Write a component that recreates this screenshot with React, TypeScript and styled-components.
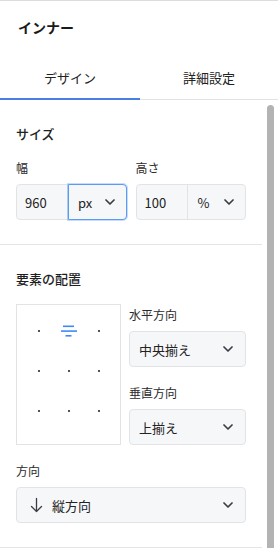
import { createGlobalStyle } from "styled-components"
import styled from "styled-components"

const GlobalStyle = createGlobalStyle`
  * { box-sizing: border-box; }
  body {
    margin: 0;
    background: #fff;
    font-family: "Noto Sans CJK JP", "Noto Sans", sans-serif;
    color: #222;
  }
`

const Chevron = () => (
  <svg width="10" height="6" viewBox="0 0 10 6">
    <polyline points="1,1 5,5 9,1" fill="none" stroke="#3a3d44" strokeWidth="1.7" strokeLinecap="round" strokeLinejoin="round" />
  </svg>
)

const ArrowDown = () => (
  <svg width="13" height="16" viewBox="0 0 13 16">
    <path d="M6.5 1.5v13M1.5 9.5l5 5 5-5" fill="none" stroke="#3a3d44" strokeWidth="1.3" strokeLinecap="round" strokeLinejoin="round" />
  </svg>
)

const CenterAlignIcon = () => (
  <svg width="16" height="14" viewBox="0 0 16 14">
    <rect x="2" y="1.5" width="11" height="1.6" fill="#3d8af7" />
    <rect x="0" y="6.3" width="16" height="1.6" fill="#3d8af7" />
    <rect x="4.5" y="11" width="6" height="1.6" fill="#3d8af7" />
  </svg>
)

const cells = ["dot", "active", "dot", "dot", "dot", "dot", "dot", "dot", "dot"]

const App = () => {
  return (
    <>
      <GlobalStyle />
      <Panel>
        <Header>インナー</Header>
        <Tabs>
          <Tab active>デザイン</Tab>
          <Tab>詳細設定</Tab>
        </Tabs>
        <Body>
          <Content>
            <Section>
              <SectionTitle>サイズ</SectionTitle>
              <SizeRow>
                <Field>
                  <Label>幅</Label>
                  <InputGroup>
                    <NumberBox>960</NumberBox>
                    <UnitBox focused>
                      px
                      <Chevron />
                    </UnitBox>
                  </InputGroup>
                </Field>
                <Field>
                  <Label>高さ</Label>
                  <InputGroup>
                    <NumberBox>100</NumberBox>
                    <UnitBox>
                      %
                      <Chevron />
                    </UnitBox>
                  </InputGroup>
                </Field>
              </SizeRow>
            </Section>
            <Section>
              <SectionTitle>要素の配置</SectionTitle>
              <AlignRow>
                <AlignBox>
                  {cells.map((c, i) => (
                    <AlignCell key={i}>{c === "active" ? <CenterAlignIcon /> : <Dot />}</AlignCell>
                  ))}
                </AlignBox>
                <AlignFields>
                  <Label>水平方向</Label>
                  <Select>
                    中央揃え
                    <Chevron />
                  </Select>
                  <Label spaced>垂直方向</Label>
                  <Select>
                    上揃え
                    <Chevron />
                  </Select>
                </AlignFields>
              </AlignRow>
              <Label spaced>方向</Label>
              <Select>
                <SelectValue>
                  <ArrowDown />
                  縦方向
                </SelectValue>
                <Chevron />
              </Select>
            </Section>
          </Content>
          <ScrollTrack>
            <ScrollThumb />
          </ScrollTrack>
        </Body>
      </Panel>
    </>
  )
}

const Panel = styled.div`
  width: 278px;
  height: 548px;
  overflow: hidden;
  border-top: 1px solid #dcdcdc;
  display: flex;
  flex-direction: column;
`

const Header = styled.div`
  height: 51px;
  padding: 0 18px;
  display: flex;
  align-items: center;
  font-size: 14px;
  font-weight: 700;
  color: #1a1a1a;
`

const Tabs = styled.div`
  display: flex;
  height: 48px;
  border-bottom: 1px solid #e2e2e2;
`

const Tab = styled.div<{ active?: boolean }>`
  flex: ${(p) => (p.active ? "0 0 140px" : "1")};
  display: flex;
  align-items: center;
  justify-content: center;
  font-size: 13px;
  color: #222;
  padding-top: 4px;
  margin-bottom: -1px;
  border-bottom: 2px solid ${(p) => (p.active ? "#4a7de6" : "transparent")};
`

const Body = styled.div`
  display: flex;
  flex: 1;
  min-height: 0;
`

const Content = styled.div`
  width: 262px;
  flex-shrink: 0;
`

const Section = styled.div`
  padding: 24px 16px 24px;
  border-bottom: 1px solid #e4e4e4;
`

const SectionTitle = styled.div`
  font-size: 13px;
  font-weight: 500;
  line-height: 20px;
  margin-bottom: 15px;
  color: #1f1f1f;
`

const Label = styled.div<{ spaced?: boolean }>`
  font-size: 12px;
  line-height: 18px;
  color: #2a2a2a;
  margin-top: ${(p) => (p.spaced ? "17px" : "0")};
  margin-bottom: 7px;
`

const SizeRow = styled.div`
  display: flex;
  gap: 9px;
`

const Field = styled.div`
  width: 111px;
`

const InputGroup = styled.div`
  display: flex;
  height: 36px;
  border: 1px solid #e1e3e7;
  border-radius: 4px;
  background: #f6f7f9;
`

const NumberBox = styled.div`
  width: 51px;
  padding-left: 8px;
  display: flex;
  align-items: center;
  font-size: 13px;
  color: #222;
  border-right: 1px solid #e1e3e7;
`

const UnitBox = styled.div<{ focused?: boolean }>`
  flex: 1;
  display: flex;
  align-items: center;
  justify-content: space-between;
  padding: 0 11px 0 9px;
  font-size: 13px;
  color: #222;
  margin: -1px -1px -1px 0;
  border-radius: 0 4px 4px 0;
  border: 1px solid ${(p) => (p.focused ? "#5a9bf5" : "transparent")};
  box-shadow: ${(p) => (p.focused ? "0 0 0 1px rgba(90,155,245,0.35)" : "none")};
`

const AlignRow = styled.div`
  display: flex;
  gap: 8px;
`

const AlignBox = styled.div`
  width: 105px;
  height: 141px;
  border: 1px solid #e1e3e7;
  display: grid;
  grid-template-columns: repeat(3, 30px);
  grid-template-rows: repeat(3, 40px);
  justify-content: center;
  align-content: start;
  padding-top: 6px;
`

const AlignCell = styled.div`
  display: flex;
  align-items: center;
  justify-content: center;
`

const Dot = styled.span`
  width: 2px;
  height: 2px;
  background: #1a1a1a;
  border-radius: 1px;
`

const AlignFields = styled.div`
  flex: 1;
  padding-top: 2px;
`

const Select = styled.div`
  height: 36px;
  border: 1px solid #e1e3e7;
  border-radius: 4px;
  background: #f6f7f9;
  display: flex;
  align-items: center;
  justify-content: space-between;
  padding: 0 12px 0 9px;
  font-size: 13px;
  color: #222;
`

const SelectValue = styled.div`
  display: flex;
  align-items: center;
  gap: 9px;
  padding-left: 4px;
`

const ScrollTrack = styled.div`
  flex: 1;
  padding: 5px 0 0 5px;
`

const ScrollThumb = styled.div`
  width: 7px;
  height: 100%;
  background: #b3b3b3;
  border-radius: 4px 4px 0 0;
`

export default App
